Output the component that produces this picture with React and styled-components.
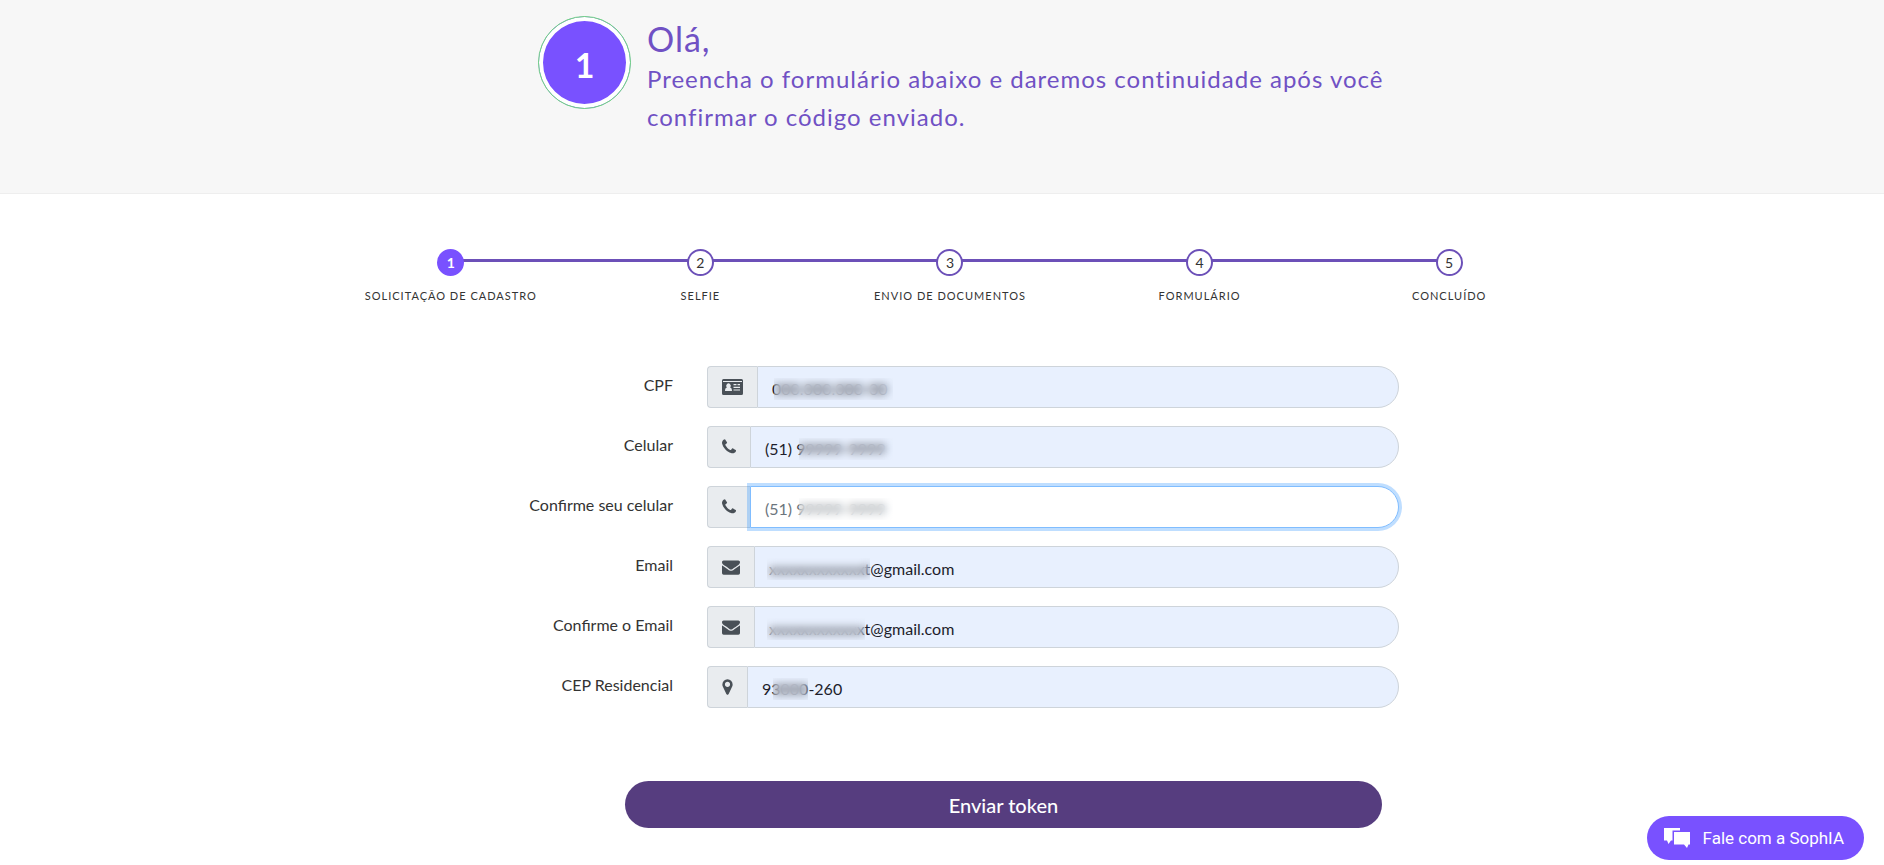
import React from 'react'
import styled, { createGlobalStyle } from 'styled-components'

const GlobalStyle = createGlobalStyle`
  * {
    box-sizing: border-box;
  }

  body {
    margin: 0;
    background: #fff;
    color: #333;
    font-family: 'Lato', sans-serif;
    font-size: 16px;
    line-height: 24px;
  }
`

const Hero = styled.header`
  background: #f7f7f7;
  border-bottom: 1px solid #eee;
`

const HeroInner = styled.div`
  display: flex;
  gap: 16px;
  max-width: 920px;
  min-height: 193px;
  margin: 0 auto;
  padding: 16px 0 48px 56px;
`

const HeroNumber = styled.div`
  display: flex;
  flex: none;
  align-items: center;
  justify-content: center;
  width: 93px;
  height: 93px;
  padding-top: 4px;
  border: 1px solid #6fd67f;
  border-radius: 50%;
  background: #7951ff;
  box-shadow: inset 0 0 0 4px #fff;
  color: #fff;
  font-size: 34px;
  font-weight: 700;
`

const HeroText = styled.div`
  color: #7051c4;
`

const Greeting = styled.h1`
  margin: 2px 0 0;
  font-size: 34px;
  font-weight: 400;
  line-height: 42px;
  letter-spacing: 1px;
`

const Lead = styled.p`
  margin: 0;
  font-size: 24px;
  line-height: 38px;
  letter-spacing: 1px;
`

const Steps = styled.ol`
  display: flex;
  max-width: 1264px;
  margin: 55px auto 0;
  padding: 0 0 0 16px;
  list-style: none;
`

const Step = styled.li`
  position: relative;
  display: flex;
  flex: 1;
  flex-direction: column;
  align-items: center;
  gap: 12px;

  &:not(:last-child)::after {
    content: '';
    position: absolute;
    top: 10px;
    left: 50%;
    width: 100%;
    height: 3px;
    background: #6c50b8;
  }
`

const StepNumber = styled.span`
  z-index: 1;
  display: flex;
  align-items: center;
  justify-content: center;
  width: 27px;
  height: 27px;
  border: 2px solid ${({ $active }) => ($active ? '#7951ff' : '#6c50b8')};
  border-radius: 50%;
  background: ${({ $active }) => ($active ? '#7951ff' : '#fff')};
  color: ${({ $active }) => ($active ? '#fff' : '#333')};
  font-size: 14px;
  font-weight: ${({ $active }) => ($active ? 700 : 400)};
`

const StepLabel = styled.span`
  font-size: 11px;
  line-height: 16px;
  letter-spacing: 1px;
  text-transform: uppercase;
`

const Form = styled.form`
  max-width: 946px;
  margin: 62px auto 0;
  padding: 0 16px;
`

const Field = styled.div`
  display: grid;
  grid-template-columns: 188px 1fr;
  column-gap: 34px;
  align-items: center;
  margin-bottom: 18px;
`

const Label = styled.label`
  padding-bottom: 4px;
  text-align: right;
`

const InputGroup = styled.div`
  position: relative;
  display: flex;
  height: 42px;
`

const Addon = styled.span`
  display: flex;
  align-items: center;
  padding: 0 14px;
  border: 1px solid #ced4da;
  border-right: 0;
  border-radius: 4px 0 0 4px;
  background: #e9ecef;
  color: #495057;
`

const Input = styled.input`
  flex: 1;
  min-width: 0;
  padding: 3px 14px 0;
  border: 1px solid ${({ $focused }) => ($focused ? '#80bdff' : '#ced4da')};
  border-radius: 0 21px 21px 0;
  outline: 0;
  background: ${({ $focused }) => ($focused ? '#fff' : '#e8f0fe')};
  box-shadow: ${({ $focused }) =>
    $focused ? '0 0 0 3px rgba(0, 123, 255, 0.25)' : 'none'};
  color: ${({ $focused }) => ($focused ? '#6c757d' : '#1d1d2b')};
  font-family: inherit;
  font-size: 16px;
`

// hides the private part of a value
const Mask = styled.span`
  position: absolute;
  top: 12px;
  left: ${({ $left }) => $left}px;
  width: ${({ $width }) => $width}px;
  height: 22px;
  backdrop-filter: blur(4px);
  pointer-events: none;
`

const Actions = styled.div`
  display: flex;
  justify-content: flex-end;
  margin: 73px 17px 0 140px;
`

const Submit = styled.button`
  flex: 1;
  height: 47px;
  padding: 0;
  border: 0;
  border-radius: 24px;
  background: #563d7f;
  color: #fff;
  font-family: inherit;
  font-size: 20px;
  font-weight: 500;
`

const Chat = styled.button`
  position: fixed;
  right: 20px;
  bottom: 5px;
  display: flex;
  align-items: center;
  gap: 12px;
  height: 44px;
  padding: 0 20px 0 16px;
  border: 0;
  border-radius: 22px;
  background: #7951ff;
  color: #fff;
  font-family: 'Roboto', sans-serif;
  font-size: 17px;
`

const CardIcon = () => (
  <svg width="21" height="16" viewBox="0 0 21 16" fill="currentColor" aria-hidden="true">
    <path
      fillRule="evenodd"
      d="M1.5 0h18a1.500 1.500 0 0 1 1.500 1.500v13a1.500 1.500 0 0 1-1.500 1.500h-18a1.500 1.500 0 0 1-1.500-1.500v-13a1.500 1.500 0 0 1 1.500-1.500zM1 2v1h19v-1zM3 12h7c0-2-.7-3.300-2-3.500a2.300 2.300 0 1 0-3 0c-1.300.2-2 1.500-2 3.500zM11.500 5v1.200h3V5zM15.500 5v1.200h2.500V5zM11.500 7.700v1.200h6.500V7.700zM11.500 10.400v1.200h6.500v-1.200z"
    />
  </svg>
)

const PhoneIcon = () => (
  <svg width="14" height="18" viewBox="192 0 1408 1792" fill="currentColor" aria-hidden="true">
    <path d="M1600 1240q0 27-10 70.5t-21 68.5q-21 50-122 106-94 51-186 51-27 0-53-3.5t-57.5-12.5-47-14.5-55.5-20.5-49-18q-98-35-175-83-127-79-264-216t-216-264q-48-77-83-175-3-9-18-49t-20.5-55.5-14.5-47-12.5-57.5-3.5-53q0-92 51-186 56-101 106-122 25-11 68.5-21t70.5-10q14 0 21 3 18 6 53 76 11 19 30 54t35 63.5 31 53.5q3 4 17.5 25t21.5 35.5 7 28.5q0 20-28.5 50t-62 55-62 53-28.5 46q0 9 5 22.5t8.5 20.5 14 24 11.5 19q76 137 174 235t235 174q2 1 19 11.5t24 14 20.5 8.5 22.5 5q18 0 46-28.5t53-62 55-62 50-28.5q14 0 28.5 7t35.5 21.5 25 17.500q25 15 53.500 31t63.500 35 54 30q70 35 76 53 3 7 3 21z" />
  </svg>
)

const MailIcon = () => (
  <svg width="18" height="18" viewBox="0 0 1792 1792" fill="currentColor" aria-hidden="true">
    <path d="M1792 710v794q0 66-47 113t-113 47h-1472q-66 0-113-47t-47-113v-794q44 49 101 87 362 246 497 345 57 42 92.5 65.5t94.500 48 110 24.500h2q51 0 110-24.500t94.500-48 92.500-65.500q170-123 498-345 57-39 100-87zm0-294q0 79-49 151t-122 123q-376 261-468 325-10 7-42.500 31t-54 38.500-52 32.500-57.500 27-50 9h-2q-23 0-50-9t-57.500-27-52-32.500-54-38.500-42.500-31q-91-64-262-182.500t-205-142.500q-62-42-117-115.500t-55-136.500q0-78 41.500-130t118.500-52h1472q65 0 112.500 47t47.500 113z" />
  </svg>
)

const PinIcon = () => (
  <svg width="11" height="18" viewBox="384 0 1024 1792" fill="currentColor" aria-hidden="true">
    <path d="M1152 640q0-106-75-181t-181-75-181 75-75 181 75 181 181 75 181-75 75-181zm256 0q0 109-33 179l-364 774q-16 33-47.500 52t-67.500 19-67.500-19-46.500-52l-365-774q-33-70-33-179 0-212 150-362t362-150 362 150 150 362z" />
  </svg>
)

const ChatIcon = () => (
  <svg width="28" height="20" viewBox="0 0 28 20" fill="currentColor" aria-hidden="true">
    <path d="M1 0h16v2.500H9.500v10H8L5.500 16 4 12.500H1z" />
    <path d="M11 4h16v12.500h-1.500L24 20l-3-3.500H11z" />
  </svg>
)

const steps = [
  'Solicitação de cadastro',
  'Selfie',
  'Envio de documentos',
  'Formulário',
  'Concluído',
]

const fields = [
  { id: 'cpf', label: 'CPF', icon: CardIcon, value: '000.000.000-00', mask: [67, 119] },
  { id: 'phone', label: 'Celular', icon: PhoneIcon, value: '(51) 99999-9999', mask: [92, 94] },
  {
    id: 'phone-confirm',
    label: 'Confirme seu celular',
    icon: PhoneIcon,
    value: '(51) 99999-9999',
    mask: [92, 94],
    focused: true,
  },
  { id: 'email', label: 'Email', icon: MailIcon, value: 'xxxxxxxxxxxxt@gmail.com', mask: [60, 103] },
  {
    id: 'email-confirm',
    label: 'Confirme o Email',
    icon: MailIcon,
    value: 'xxxxxxxxxxxxt@gmail.com',
    mask: [60, 98],
  },
  { id: 'cep', label: 'CEP Residencial', icon: PinIcon, value: '93000-260', mask: [66, 35] },
]

const FormField = ({ id, label, icon: Icon, value, mask, focused }) => (
  <Field>
    <Label htmlFor={id}>{label}</Label>
    <InputGroup>
      <Addon>
        <Icon />
      </Addon>
      <Input id={id} type="text" defaultValue={value} $focused={focused} />
      <Mask $left={mask[0]} $width={mask[1]} />
    </InputGroup>
  </Field>
)

const App = () => {
  return (
    <>
      <GlobalStyle />
      <Hero>
        <HeroInner>
          <HeroNumber>1</HeroNumber>
          <HeroText>
            <Greeting>Olá,</Greeting>
            <Lead>
              Preencha o formulário abaixo e daremos continuidade após você
              confirmar o código enviado.
            </Lead>
          </HeroText>
        </HeroInner>
      </Hero>
      <main>
        <Steps>
          {steps.map((step, index) => (
            <Step key={step}>
              <StepNumber $active={index === 0}>{index + 1}</StepNumber>
              <StepLabel>{step}</StepLabel>
            </Step>
          ))}
        </Steps>
        <Form>
          {fields.map(field => (
            <FormField key={field.id} {...field} />
          ))}
          <Actions>
            <Submit type="button">Enviar token</Submit>
          </Actions>
        </Form>
      </main>
      <Chat type="button">
        <ChatIcon />
        Fale com a SophIA
      </Chat>
    </>
  )
}

export default App
